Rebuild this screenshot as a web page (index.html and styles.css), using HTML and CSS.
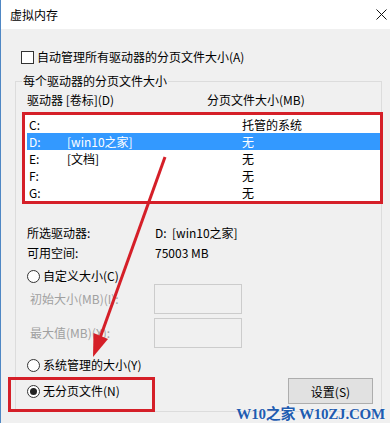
FILE: index.html
```html
<!DOCTYPE html>
<html lang="zh-CN">

<head>
    <meta charset="UTF-8">
    <meta name="viewport" content="width=device-width, initial-scale=1.0">
    <title>虚拟内存</title>
    <link rel="stylesheet" href="styles.css">
</head>

<body>
    <div class="window">
        <div class="titlebar">
            <span class="title">虚拟内存</span>
            <svg class="close" width="11" height="11" viewBox="0 0 11 11">
                <path d="M0.5 0.5 L10.5 10.5 M10.5 0.5 L0.5 10.5" stroke="#111" stroke-width="1" fill="none"/>
            </svg>
        </div>

        <label class="check-row">
            <span class="checkbox"></span>
            <span>自动管理所有驱动器的分页文件大小(A)</span>
        </label>

        <fieldset class="group">
            <legend>每个驱动器的分页文件大小</legend>

            <div class="list-header">
                <span class="col-drive">驱动器 [卷标](D)</span>
                <span>分页文件大小(MB)</span>
            </div>

            <div class="listbox">
                <div class="list-row"><span>C:</span><span></span><span>托管的系统</span></div>
                <div class="list-row selected"><span>D:</span><span>[win10之家]</span><span>无</span></div>
                <div class="list-row"><span>E:</span><span>[文档]</span><span>无</span></div>
                <div class="list-row"><span>F:</span><span></span><span>无</span></div>
                <div class="list-row"><span>G:</span><span></span><span>无</span></div>
            </div>

            <div class="info">
                <div class="info-row"><span class="info-label">所选驱动器:</span><span>D:&nbsp;&nbsp;[win10之家]</span></div>
                <div class="info-row"><span class="info-label">可用空间:</span><span>75003 MB</span></div>
            </div>

            <label class="radio-row first">
                <span class="radio"></span>
                <span>自定义大小(C)</span>
            </label>

            <div class="size-row">
                <span class="size-label">初始大小(MB)(I):</span>
                <span class="size-input"></span>
            </div>
            <div class="size-row">
                <span class="size-label">最大值(MB)(X):</span>
                <span class="size-input"></span>
            </div>

            <label class="radio-row system">
                <span class="radio"></span>
                <span>系统管理的大小(Y)</span>
            </label>

            <div class="last-row">
                <label class="radio-row">
                    <span class="radio checked"></span>
                    <span>无分页文件(N)</span>
                </label>
                <button class="set-button">设置(S)</button>
            </div>
        </fieldset>

        <!-- annotations drawn over the dialog -->
        <div class="mark-box"></div>
        <svg class="arrow" width="390" height="423" viewBox="0 0 390 423">
            <line x1="165" y1="157" x2="100" y2="338" stroke="#d51f28" stroke-width="3"/>
            <polygon points="93,357 93.5,333 108,339" fill="#d51f28"/>
        </svg>
        <div class="watermark">W10之家 W10ZJ.COM</div>
    </div>
</body>

</html>
```

FILE: styles.css
```css
body {
    margin: 0;
    font-family: "Noto Sans CJK SC", sans-serif;
    font-size: 12px;
    line-height: 16px;
    color: #000;
    background-color: #f0f0f0;
}

.window {
    position: relative;
    width: 390px;
    height: 423px;
    box-sizing: border-box;
    border-left: 1px solid #4f87c4;
    background-color: #f0f0f0;
    overflow: hidden;
}

.titlebar {
    display: flex;
    justify-content: space-between;
    align-items: center;
    height: 29px;
    padding: 0 3px 0 9px;
    background-color: #fff;
}

.close {
    display: block;
}

.check-row {
    display: flex;
    align-items: center;
    margin: 20px 0 0 20px;
}

.checkbox {
    width: 13px;
    height: 13px;
    box-sizing: border-box;
    border: 1px solid #333;
    background-color: #fff;
    margin-right: 3px;
}

.group {
    margin: 8px 8px 0 14px;
    padding: 0 0 7px 6px;
    border: 1px solid #dcdcdc;
    min-width: 0;
}

.group legend {
    padding: 0 1px;
}

.list-header {
    display: flex;
    margin-top: 3px;
    padding-left: 5px;
}

.col-drive {
    width: 180px;
}

.listbox {
    margin: 4px -2px 0 0;
    padding: 1px 0 0 2px;
    border: 3px solid #d51f28;
    background-color: #fff;
}

.list-row {
    display: grid;
    grid-template-columns: 38px 175px 1fr;
    height: 17px;
    line-height: 17px;
    padding-left: 2px;
}

.list-row.selected {
    background-color: #3399ff;
    color: #fff;
}

.info {
    margin-top: 21px;
    padding-left: 5px;
}

.info-row {
    display: flex;
    margin-bottom: 4px;
}

.info-label {
    width: 128px;
}

.radio-row {
    display: flex;
    align-items: center;
    padding-left: 5px;
}

.radio-row.first {
    margin-top: 7px;
}

.radio-row.system {
    margin-top: 9px;
}

.radio {
    position: relative;
    width: 13px;
    height: 13px;
    box-sizing: border-box;
    border: 1px solid #333;
    border-radius: 50%;
    background-color: #fff;
    margin-right: 3px;
}

.radio.checked::after {
    content: "";
    position: absolute;
    left: 2px;
    top: 2px;
    width: 7px;
    height: 7px;
    border-radius: 50%;
    background-color: #222;
}

.size-row {
    display: flex;
    align-items: center;
    padding-left: 8px;
    margin-bottom: 4px;
    color: #a0a0a0;
}

.size-label {
    width: 124px;
}

.size-input {
    width: 88px;
    height: 30px;
    box-sizing: border-box;
    border: 1px solid #cccccc;
    background-color: #f0f0f0;
}

.last-row {
    display: flex;
    justify-content: space-between;
    align-items: center;
    margin-top: 5px;
    padding-right: 8px;
}

.set-button {
    width: 85px;
    height: 26px;
    font-family: inherit;
    font-size: 12px;
    color: #000;
    background-color: #e1e1e1;
    border: 1px solid #adadad;
    padding: 0;
}

.mark-box {
    position: absolute;
    left: 7px;
    top: 377px;
    width: 147px;
    height: 35px;
    box-sizing: border-box;
    border: 3px solid #d51f28;
}

.arrow {
    position: absolute;
    left: -1px;
    top: 0;
    pointer-events: none;
}

.watermark {
    position: absolute;
    right: 5px;
    bottom: 1px;
    font-family: "Liberation Serif", "Noto Sans CJK SC", serif;
    font-weight: bold;
    font-size: 15px;
    line-height: 16px;
    letter-spacing: -0.2px;
    color: #1f5cb0;
    text-shadow: 0 0 2px #fff;
}
```
